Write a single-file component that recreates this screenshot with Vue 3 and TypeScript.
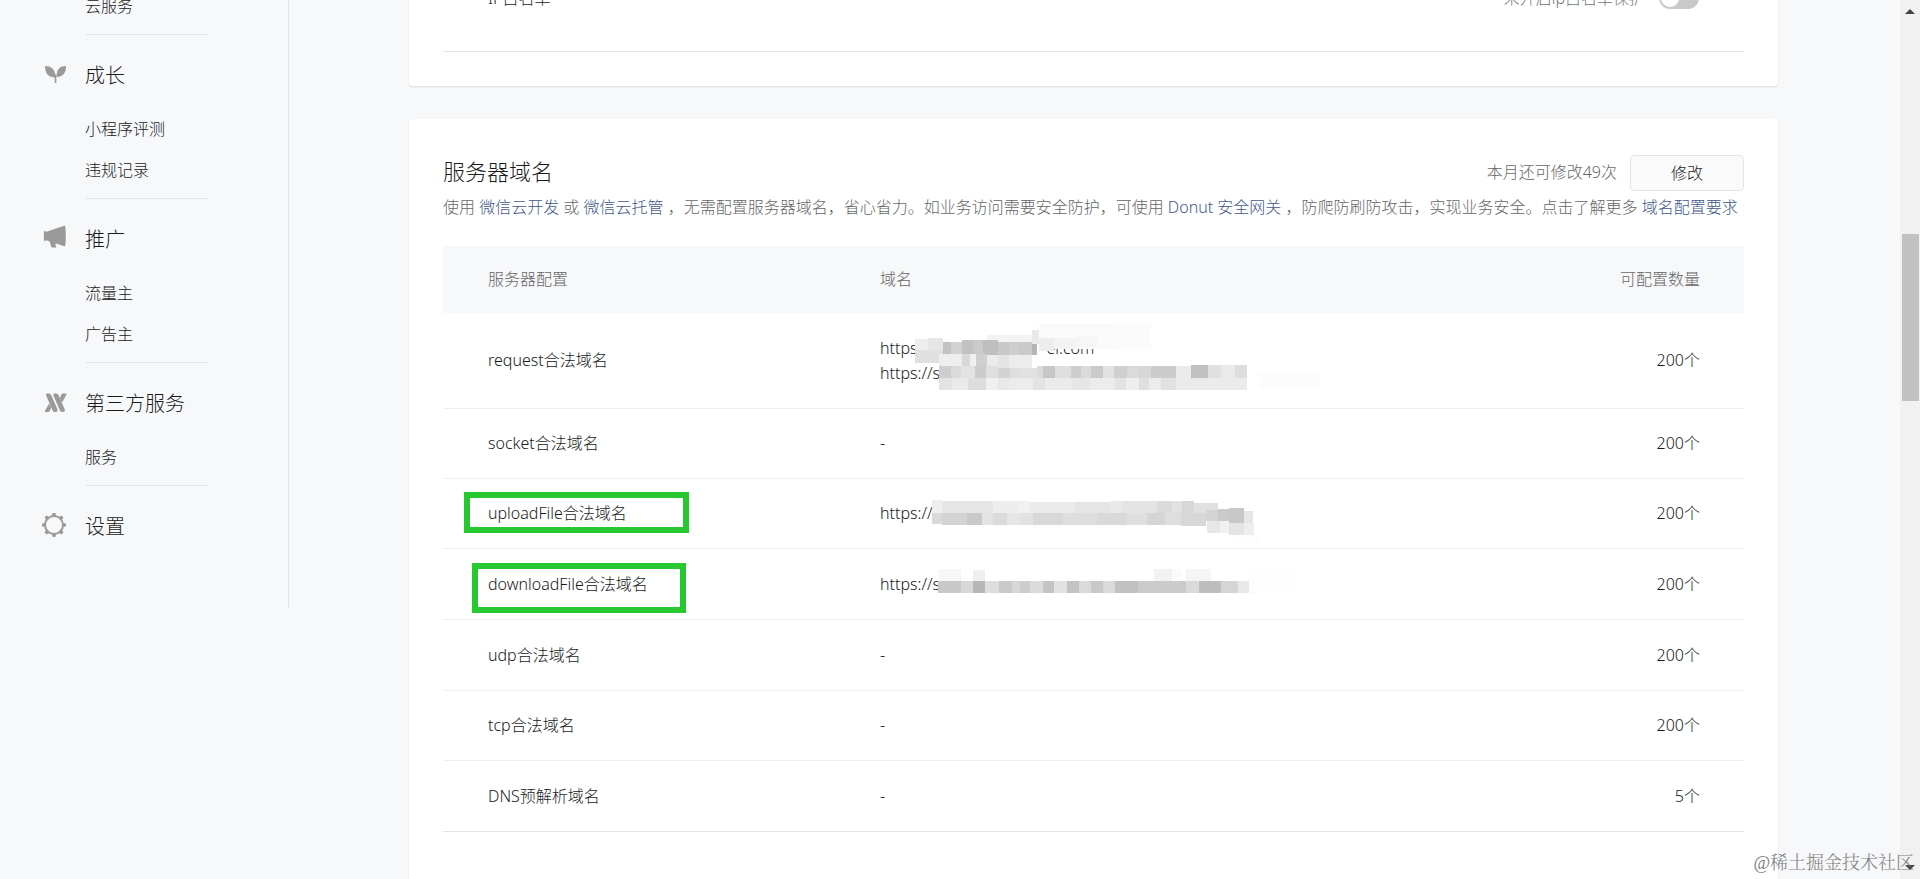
<script setup lang="ts">
type Rect = [number, number, number, number, string]

interface Mosaic {
  id: string
  viewBox: string
  rects: Rect[]
}

interface DomainRow {
  name: string
  urls: string[]
  count: string
  mark?: string
  mosaic?: Mosaic
}

interface MenuGroup {
  title: string
  icon: string
  items: string[]
}

const groups: MenuGroup[] = [
  { title: '', icon: '', items: ['云服务'] },
  { title: '成长', icon: 'sprout', items: ['小程序评测', '违规记录'] },
  { title: '推广', icon: 'horn', items: ['流量主', '广告主'] },
  { title: '第三方服务', icon: 'third', items: ['服务'] },
  { title: '设置', icon: 'gear', items: [] },
]

const gearTeeth = [0, 45, 90, 135, 180, 225, 270, 315]

const requestMosaic: Mosaic = {
  id: 'request',
  viewBox: '0 0 1500 330',
  rects: [
    [380, 72, 135, 22, '#f3f3f3'], [515, 58, 22, 40, '#e9e9e9'], [537, 40, 235, 73, '#fafafa'],
    [772, 36, 102, 77, '#fbfbfb'], [537, 80, 45, 40, '#ececec'], [582, 80, 68, 35, '#f3f3f3'], [650, 76, 60, 32, '#f6f6f6'],
    [165, 84, 38, 34, '#ededed'], [203, 80, 45, 40, '#e6e6e6'], [165, 118, 83, 38, '#e0e0e0'],
    [248, 94, 24, 38, '#c3c3c3'], [272, 94, 34, 38, '#d2d2d2'], [306, 88, 34, 44, '#c2c2c2'], [340, 88, 30, 44, '#cacaca'],
    [370, 88, 44, 44, '#bfbfbf'], [414, 92, 32, 40, '#c8c8c8'], [446, 94, 30, 38, '#cecece'], [476, 94, 40, 38, '#cacaca'], [516, 98, 15, 34, '#b5b5b5'],
    [237, 130, 69, 34, '#eeeeee'], [306, 130, 24, 40, '#d8d8d8'], [330, 130, 18, 40, '#f0f0f0'], [348, 130, 32, 40, '#cfcfcf'],
    [380, 132, 34, 38, '#ebebeb'], [414, 132, 32, 38, '#e3e3e3'], [446, 132, 70, 38, '#ececec'], [516, 132, 14, 30, '#ffffff'],
    [237, 164, 35, 38, '#cecece'], [272, 164, 32, 38, '#dadada'], [304, 164, 40, 38, '#e2e2e2'], [344, 164, 34, 38, '#cccccc'], [378, 164, 35, 38, '#dfdfdf'],
    [413, 170, 36, 32, '#d3d3d3'], [449, 170, 31, 32, '#dedede'], [480, 170, 50, 32, '#e1e1e1'], [530, 164, 20, 38, '#dadada'], [550, 164, 34, 36, '#c7c7c7'],
    [584, 164, 50, 38, '#dedede'], [634, 164, 30, 38, '#cdcdcd'], [664, 164, 30, 38, '#dadada'], [694, 164, 34, 38, '#cacaca'], [728, 164, 34, 38, '#e2e2e2'],
    [762, 164, 38, 38, '#d0d0d0'], [800, 164, 34, 38, '#dadada'], [834, 164, 38, 38, '#d7d7d7'], [872, 164, 76, 38, '#cccccc'], [948, 164, 45, 36, '#ebebeb'],
    [993, 162, 50, 38, '#c1c1c1'], [1043, 162, 40, 40, '#e0e0e0'], [1083, 162, 42, 40, '#eaeaea'], [1125, 162, 36, 40, '#dedede'],
    [237, 202, 38, 34, '#e3e3e3'], [275, 202, 50, 34, '#eaeaea'], [325, 202, 53, 34, '#dddddd'], [378, 202, 36, 34, '#f0f0f0'], [414, 202, 32, 34, '#e8e8e8'],
    [446, 202, 74, 34, '#ececec'], [520, 202, 36, 34, '#e3e3e3'], [556, 202, 80, 34, '#ebebeb'], [636, 202, 54, 34, '#e6e6e6'], [690, 202, 76, 34, '#ececec'],
    [766, 202, 32, 34, '#e3e3e3'], [798, 202, 38, 34, '#eeeeee'], [836, 202, 32, 34, '#dfdfdf'], [868, 202, 36, 34, '#ececec'], [904, 202, 44, 34, '#e1e1e1'], [948, 200, 213, 36, '#ebebeb'],
    [1198, 186, 182, 44, '#fcfcfc'],
  ],
}

const uploadMosaic: Mosaic = {
  id: 'upload',
  viewBox: '0 0 1500 210',
  rects: [
    [216, 60, 30, 40, '#eeeeee'], [246, 62, 152, 38, '#e5e5e5'], [398, 64, 76, 36, '#ededed'], [474, 64, 36, 36, '#f1f1f1'], [510, 66, 135, 34, '#ebebeb'],
    [645, 66, 105, 34, '#e5e5e5'], [750, 64, 36, 36, '#e9e9e9'], [786, 64, 104, 36, '#e4e4e4'], [890, 64, 46, 36, '#dadada'], [936, 64, 30, 36, '#e1e1e1'], [966, 64, 36, 36, '#d7d7d7'], [1002, 68, 71, 34, '#e0e0e0'],
    [216, 100, 30, 32, '#d9d9d9'], [246, 100, 76, 36, '#d3d3d3'], [322, 100, 44, 36, '#c9c9c9'], [366, 100, 34, 36, '#e3e3e3'], [400, 100, 40, 36, '#dbdbdb'], [440, 100, 36, 36, '#e6e6e6'],
    [476, 100, 44, 36, '#e2e2e2'], [520, 100, 90, 36, '#d8d8d8'], [610, 100, 100, 36, '#dedede'], [710, 100, 92, 36, '#d9d9d9'], [802, 100, 60, 36, '#dfdfdf'], [862, 100, 54, 34, '#d5d5d5'],
    [916, 100, 46, 34, '#dedede'], [962, 100, 76, 38, '#d7d7d7'], [1038, 90, 36, 32, '#d4d4d4'], [1074, 86, 34, 36, '#cbcbcb'], [1108, 84, 44, 44, '#c8c8c8'],
    [1152, 94, 27, 34, '#e6e6e6'], [1040, 122, 40, 36, '#e7e7e7'], [1080, 122, 28, 36, '#f0f0f0'], [1108, 128, 44, 36, '#e4e4e4'], [1152, 128, 29, 36, '#eeeeee'], [1120, 164, 80, 22, '#fdfdfd'],
  ],
}

const downloadMosaic: Mosaic = {
  id: 'download',
  viewBox: '0 252 1500 108',
  rects: [
    [236, 268, 68, 36, '#f7f7f7'], [340, 270, 34, 34, '#efefef'], [882, 268, 54, 36, '#f2f2f2'], [936, 268, 30, 28, '#fafafa'], [978, 266, 74, 38, '#f5f5f5'], [1168, 270, 140, 70, '#fdfdfd'],
    [234, 304, 68, 36, '#c8c8c8'], [302, 304, 38, 36, '#d8d8d8'], [340, 304, 35, 36, '#b7b7b7'], [375, 304, 42, 36, '#dddddd'], [417, 304, 39, 36, '#c9c9c9'], [456, 304, 24, 36, '#d7d7d7'],
    [480, 304, 30, 36, '#cdcdcd'], [510, 304, 38, 36, '#dbdbdb'], [548, 304, 34, 36, '#c4c4c4'], [582, 304, 38, 36, '#e2e2e2'], [620, 304, 38, 36, '#c3c3c3'], [658, 304, 35, 36, '#dadada'],
    [693, 304, 35, 36, '#c9c9c9'], [728, 304, 36, 36, '#dadada'], [764, 304, 70, 36, '#c1c1c1'], [834, 304, 144, 36, '#cbcbcb'], [978, 304, 38, 36, '#dadada'], [1016, 304, 68, 36, '#bebebe'],
    [1084, 304, 50, 36, '#d5d5d5'], [1134, 304, 34, 36, '#e8e8e8'],
  ],
}

const rows: DomainRow[] = [
  { name: 'request合法域名', urls: ['https://', 'https://s'], count: '200个', mosaic: requestMosaic },
  { name: 'socket合法域名', urls: ['-'], count: '200个' },
  { name: 'uploadFile合法域名', urls: ['https://'], count: '200个', mark: 'upload', mosaic: uploadMosaic },
  { name: 'downloadFile合法域名', urls: ['https://s'], count: '200个', mark: 'download', mosaic: downloadMosaic },
  { name: 'udp合法域名', urls: ['-'], count: '200个' },
  { name: 'tcp合法域名', urls: ['-'], count: '200个' },
  { name: 'DNS预解析域名', urls: ['-'], count: '5个' },
]
</script>

<template>
  <div class="page">
    <nav class="sidebar">
      <section v-for="g in groups" :key="g.title" class="group">
        <h3 v-if="g.title" class="group-title">
          <svg class="icon" viewBox="0 0 24 24" aria-hidden="true">
            <g v-if="g.icon === 'sprout'" fill="#9a9a9a">
              <path d="M2 3 C8 3 12.500 6 12.500 14.500 C5 14.500 2 10 2 3Z" />
              <path d="M23 3 C17 3 13.500 6 13.500 14 C20 14 23 10 23 3Z" />
              <path d="M11.500 11 L13.300 12 V20 H11.800Z" />
            </g>
            <g v-else-if="g.icon === 'horn'" fill="#9a9a9a">
              <path d="M1 4 H2.500 V5 L22 -1.500 Q23 3 22.800 9 Q23 15 22 19.500 L13 16.500 L12.300 17.500 L13.500 20.500 H8.500 L6.500 14.500 L2.500 13 V14 H1 Q.6 9 1 4Z" />
            </g>
            <g v-else-if="g.icon === 'third'" fill="#9a9a9a">
              <path d="M3.500 2.500 H6 Q7.500 2.500 8.200 4 L14.500 18.500 Q15 21 12.500 21 H11.500 Q10.400 21 9.800 19.800 L3.300 5 Q2.700 3 3.500 2.500Z" />
              <path d="M10.800 2.500 H13.300 Q14.800 2.500 15.500 4 L21.800 18.500 Q22.300 21 19.800 21 H18.800 Q17.700 21 17.100 19.800 L10.600 5 Q10 3 10.800 2.500Z" />
              <path d="M6.200 12.500 L8.300 16.700 L6.800 20 Q6.300 21 5.200 21 H2.700 Q1.400 21 2 19.700Z" />
              <path d="M19 11.800 L16.900 7.300 L18.400 3.600 Q18.900 2.500 20 2.500 H22.600 Q24 2.500 23.400 3.800Z" />
            </g>
            <g v-else fill="#9a9a9a">
              <circle cx="11" cy="11" r="9" fill="none" stroke="#9a9a9a" stroke-width="2" />
              <rect
                v-for="a in gearTeeth"
                :key="a"
                x="9.200"
                y="-1"
                width="3.600"
                height="4"
                rx="1.200"
                :transform="`rotate(${a} 11 11)`"
              />
            </g>
          </svg>
          <span>{{ g.title }}</span>
        </h3>
        <ul v-if="g.items.length" class="items">
          <li v-for="item in g.items" :key="item"><a href="#">{{ item }}</a></li>
        </ul>
      </section>
    </nav>

    <main class="main">
      <section class="card whitelist">
        <div class="setting">
          <span class="setting-name">IP白名单</span>
          <label class="switch-label">
            未开启ip白名单保护
            <input class="switch" type="checkbox" />
          </label>
        </div>
      </section>

      <section class="card domains">
        <header class="head">
          <h2>服务器域名</h2>
          <span class="quota">本月还可修改49次</span>
          <button type="button" class="edit">修改</button>
        </header>
        <p class="desc">
          使用 <a href="#">微信云开发</a> 或 <a href="#">微信云托管</a> ，无需配置服务器域名，省心省力。如业务访问需要安全防护，可使用 <a href="#">Donut 安全网关</a> ，防爬防刷防攻击，实现业务安全。点击了解更多 <a href="#">域名配置要求</a>
        </p>
        <table class="table">
          <thead>
            <tr>
              <th class="c-name">服务器配置</th>
              <th>域名</th>
              <th class="c-count">可配置数量</th>
            </tr>
          </thead>
          <tbody>
            <tr v-for="r in rows" :key="r.name">
              <td class="c-name">
                <span class="name">{{ r.name }}<i v-if="r.mark" class="mark" :class="r.mark"></i></span>
              </td>
              <td>
                <div class="urls">
                  <div v-for="(u, i) in r.urls" :key="i" class="url">
                    <span>{{ u }}</span>
                    <span v-if="r.mosaic?.id === 'request' && i === 0" class="url-tail">ei.com</span>
                  </div>
                  <svg v-if="r.mosaic" class="mosaic" :class="r.mosaic.id" :viewBox="r.mosaic.viewBox" shape-rendering="crispEdges" aria-hidden="true">
                    <rect v-for="(b, i) in r.mosaic.rects" :key="i" :x="b[0]" :y="b[1]" :width="b[2]" :height="b[3]" :fill="b[4]" />
                  </svg>
                </div>
              </td>
              <td class="c-count">{{ r.count }}</td>
            </tr>
          </tbody>
        </table>
      </section>
    </main>

    <div class="scrollbar" aria-hidden="true">
      <svg class="arrow" viewBox="0 0 10 5"><path d="M0 5 L5 0 L10 5Z" fill="#444" /></svg>
      <div class="track"><div class="thumb"></div></div>
      <svg class="arrow" viewBox="0 0 10 5"><path d="M0 0 L5 5 L10 0Z" fill="#444" /></svg>
    </div>

    <div class="watermark">@稀土掘金技术社区</div>
  </div>
</template>

<style>
body {
  margin: 0;
  background: #f6f8f9;
}
</style>

<style scoped>
.page {
  display: flex;
  align-items: flex-start;
  height: 100vh;
  overflow: hidden;
  background: #f7f8fa;
  color: #1a1a1a;
  font-family: "Noto Sans", "Noto Sans CJK SC", sans-serif;
  font-size: 16px;
  font-weight: 300;
  line-height: 25px;
}
a {
  color: #435788;
  text-decoration: none;
}

.sidebar {
  box-sizing: border-box;
  flex: none;
  width: 289px;
  margin-top: -14px;
  padding-bottom: 64px;
  border-right: 1px solid #e4e6e8;
}
.group::after {
  content: "";
  display: block;
  width: 123px;
  margin: 7px 0 0 86px;
  border-bottom: 1px solid #e2e4e6;
}
.group:last-child::after {
  display: none;
}
.group-title {
  display: flex;
  align-items: center;
  gap: 18px;
  margin: 0;
  padding: 24px 0 0 43px;
  font-size: 20px;
  font-weight: 300;
  line-height: 34px;
}
.icon {
  width: 24px;
  height: 24px;
  margin-bottom: 2px;
  overflow: visible;
}
.items {
  margin: 0;
  padding: 16px 0 0 85px;
  list-style: none;
  line-height: 41px;
}
.group:first-child .items {
  padding-top: 0;
}
.items a {
  color: #1a1a1a;
}

.main {
  flex: 1;
  min-width: 0;
  padding: 0 122px 0 120px;
}
.card {
  padding: 0 34px;
  background: #fff;
  border-radius: 4px;
  box-shadow: 0 1px 2px rgba(0, 0, 0, 0.12);
}
.whitelist {
  margin-top: -55px;
  padding-bottom: 34px;
}
.setting {
  display: flex;
  align-items: center;
  justify-content: space-between;
  height: 106px;
  padding: 0 45px;
  border-bottom: 1px solid #e4e6e8;
}
.switch-label {
  display: flex;
  align-items: center;
  gap: 14px;
  color: #757575;
}
.switch {
  box-sizing: border-box;
  appearance: none;
  width: 40px;
  height: 22px;
  margin: 0;
  border-radius: 11px;
  background: #c9c9c9;
}
.switch::before {
  content: "";
  display: block;
  width: 18px;
  height: 18px;
  margin: 2px;
  border-radius: 50%;
  background: #fff;
}

.domains {
  margin-top: 33px;
  padding-top: 36px;
  padding-bottom: 80px;
}
.head {
  display: flex;
  align-items: center;
}
.head h2 {
  flex: 1;
  margin: 0;
  padding-bottom: 4px;
  font-size: 22px;
  font-weight: 300;
  line-height: 32px;
}
.quota {
  margin-right: 13px;
  padding-bottom: 2px;
  color: #666;
}
.edit {
  width: 114px;
  height: 36px;
  padding: 0;
  border: 1px solid #e4e4e4;
  border-radius: 4px;
  background: #fafafa;
  color: #1a1a1a;
  font: inherit;
}
.desc {
  margin: 4px 0 26px;
  color: #666;
  white-space: nowrap;
}

.table {
  width: 100%;
  border-collapse: separate;
  border-spacing: 0;
  table-layout: fixed;
}
th,
td {
  box-sizing: border-box;
  height: 70px;
  padding: 0;
  border-bottom: 1px solid #efefef;
  font-weight: 300;
  text-align: left;
}
th {
  height: 67px;
  border: 0;
  background: #f6f8f9;
  color: #666;
}
tbody tr:first-child td {
  height: 96px;
}
tbody tr:nth-child(4) td,
tbody tr:nth-child(5) td,
tbody tr:last-child td {
  height: 71px;
}
tbody tr:last-child td {
  border-color: #e2e4e6;
}
.c-name {
  width: 437px;
  padding-left: 45px;
}
.c-count {
  width: 200px;
  padding-right: 44px;
  text-align: right;
}
.name,
.urls {
  position: relative;
}
.url {
  display: flex;
}
.url-tail {
  margin-left: 114px;
}
.mark {
  position: absolute;
  box-sizing: border-box;
  border: 6px solid #28c830;
}
.mark.upload {
  left: -24px;
  top: -10px;
  width: 225px;
  height: 41px;
}
.mark.download {
  left: -16px;
  top: -10px;
  width: 214px;
  height: 50px;
}
.mosaic {
  position: absolute;
  left: -20px;
  width: 500px;
}
.mosaic.request {
  top: -25px;
  height: 110px;
}
.mosaic.upload {
  top: -21px;
  height: 70px;
}
.mosaic.download {
  top: -8px;
  height: 36px;
}

.scrollbar {
  box-sizing: border-box;
  display: flex;
  flex: none;
  flex-direction: column;
  align-items: center;
  width: 20px;
  height: 100vh;
  padding: 9px 0;
  background: #f1f1f1;
}
.arrow {
  width: 10px;
  height: 5px;
}
.track {
  flex: 1;
  width: 17px;
}
.thumb {
  height: 167px;
  margin-top: 220px;
  background: #c1c1c1;
}
.watermark {
  position: absolute;
  right: 6px;
  bottom: 3px;
  color: #808080;
  font-family: "Liberation Serif", "Noto Serif CJK SC", "Noto Sans CJK SC", serif;
  font-size: 18px;
}
</style>
